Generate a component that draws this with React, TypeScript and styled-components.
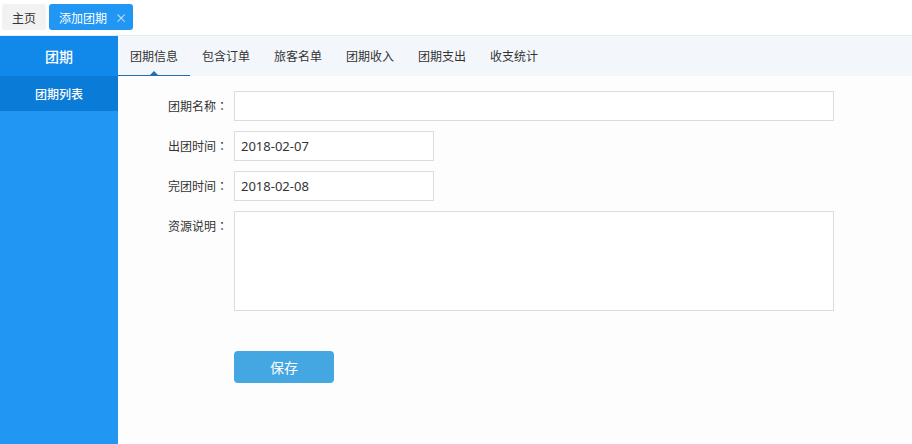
import React from "react";
import styled, { createGlobalStyle } from "styled-components";

const Global = createGlobalStyle`
  html, body, #root { margin: 0; padding: 0; height: 100%; }
  body { font-family: "Noto Sans CJK SC", "Noto Sans", sans-serif; background: #fff; color: #333; }
  * { box-sizing: border-box; }
`;

const Page = styled.div`
  display: flex;
  flex-direction: column;
  height: 100vh;
`;

const TopBar = styled.div`
  height: 36px;
  flex: none;
  display: flex;
  align-items: flex-start;
  gap: 3px;
  padding: 4px 0 0 2px;
  border-bottom: 1px solid #e6e9ee;
  background: #fff;
`;

const PageTab = styled.div<{ $active?: boolean }>`
  height: 26px;
  display: flex;
  align-items: center;
  gap: 8px;
  padding: 0 ${(p) => (p.$active ? "6px 0 10px" : "10px")};
  border-radius: 3px;
  font-size: 12px;
  background: ${(p) => (p.$active ? "#2196f3" : "#f2f2f2")};
  color: ${(p) => (p.$active ? "#fff" : "#333")};
`;

const Close = styled.span`
  font-size: 12px;
  color: #cfe7fb;
`;

const Body = styled.div`
  flex: 1;
  display: flex;
  min-height: 0;
`;

const Sidebar = styled.div`
  width: 118px;
  flex: none;
  background: #2196f3;
  display: flex;
  flex-direction: column;
`;

const SideHead = styled.div`
  height: 40px;
  display: flex;
  align-items: center;
  justify-content: center;
  background: #1189ea;
  color: #fff;
  font-size: 14px;
  font-weight: 500;
`;

const SideItem = styled.div`
  height: 35px;
  display: flex;
  align-items: center;
  justify-content: center;
  background: #0b7bd8;
  color: #fff;
  font-size: 12px;
  font-weight: 500;
`;

const Main = styled.div`
  flex: 1;
  display: flex;
  flex-direction: column;
  background: #fdfdfd;
`;

const TabBar = styled.div`
  height: 40px;
  display: flex;
  background: #f3f7fc;
`;

const Tab = styled.div<{ $active?: boolean }>`
  position: relative;
  padding: 0 12px;
  display: flex;
  align-items: center;
  font-size: 12px;
  color: #333;
  border-bottom: 1px solid ${(p) => (p.$active ? "#1f6fb2" : "transparent")};
  &::after {
    content: "";
    display: ${(p) => (p.$active ? "block" : "none")};
    position: absolute;
    left: 50%;
    bottom: 0;
    margin-left: -4px;
    border-left: 4px solid transparent;
    border-right: 4px solid transparent;
    border-bottom: 4px solid #1f6fb2;
  }
`;

const Form = styled.div`
  display: grid;
  grid-template-columns: 110px 600px;
  column-gap: 6px;
  row-gap: 10px;
  padding-top: 15px;
  align-items: start;
`;

const Label = styled.label`
  font-size: 12px;
  color: #333;
  text-align: right;
  line-height: 30px;
  height: 30px;
`;

const Colon = styled.span`
  font-family: "Noto Sans CJK JP", sans-serif;
`;

const Input = styled.input<{ $w?: number }>`
  width: ${(p) => (p.$w ? `${p.$w}px` : "100%")};
  height: 30px;
  border: 1px solid #dcdcdc;
  background: #fff;
  padding: 0 6px;
  font-family: "Noto Sans", "Noto Sans CJK SC", sans-serif;
  font-size: 13px;
  color: #333;
  outline: none;
`;

const TextArea = styled.textarea`
  width: 100%;
  height: 100px;
  border: 1px solid #dcdcdc;
  background: #fff;
  resize: none;
  outline: none;
  display: block;
`;

const Spacer = styled.div`
  height: 20px;
`;

const SaveButton = styled.button`
  width: 100px;
  height: 32px;
  border: none;
  border-radius: 4px;
  background: #45a7e1;
  color: #fff;
  font-family: "Noto Sans CJK SC", sans-serif;
  font-size: 14px;
`;

export default function App() {
  const tabs = ["团期信息", "包含订单", "旅客名单", "团期收入", "团期支出", "收支统计"];
  return (
    <Page>
      <Global />
      <TopBar>
        <PageTab>主页</PageTab>
        <PageTab $active>
          添加团期<Close>×</Close>
        </PageTab>
      </TopBar>
      <Body>
        <Sidebar>
          <SideHead>团期</SideHead>
          <SideItem>团期列表</SideItem>
        </Sidebar>
        <Main>
          <TabBar>
            {tabs.map((t, i) => (
              <Tab key={t} $active={i === 0}>
                {t}
              </Tab>
            ))}
          </TabBar>
          <Form>
            <Label>团期名称<Colon>：</Colon></Label>
            <Input />
            <Label>出团时间<Colon>：</Colon></Label>
            <Input $w={200} defaultValue="2018-02-07" />
            <Label>完团时间<Colon>：</Colon></Label>
            <Input $w={200} defaultValue="2018-02-08" />
            <Label>资源说明<Colon>：</Colon></Label>
            <TextArea />
            <Spacer />
            <Spacer />
            <span />
            <SaveButton>保存</SaveButton>
          </Form>
        </Main>
      </Body>
    </Page>
  );
}
